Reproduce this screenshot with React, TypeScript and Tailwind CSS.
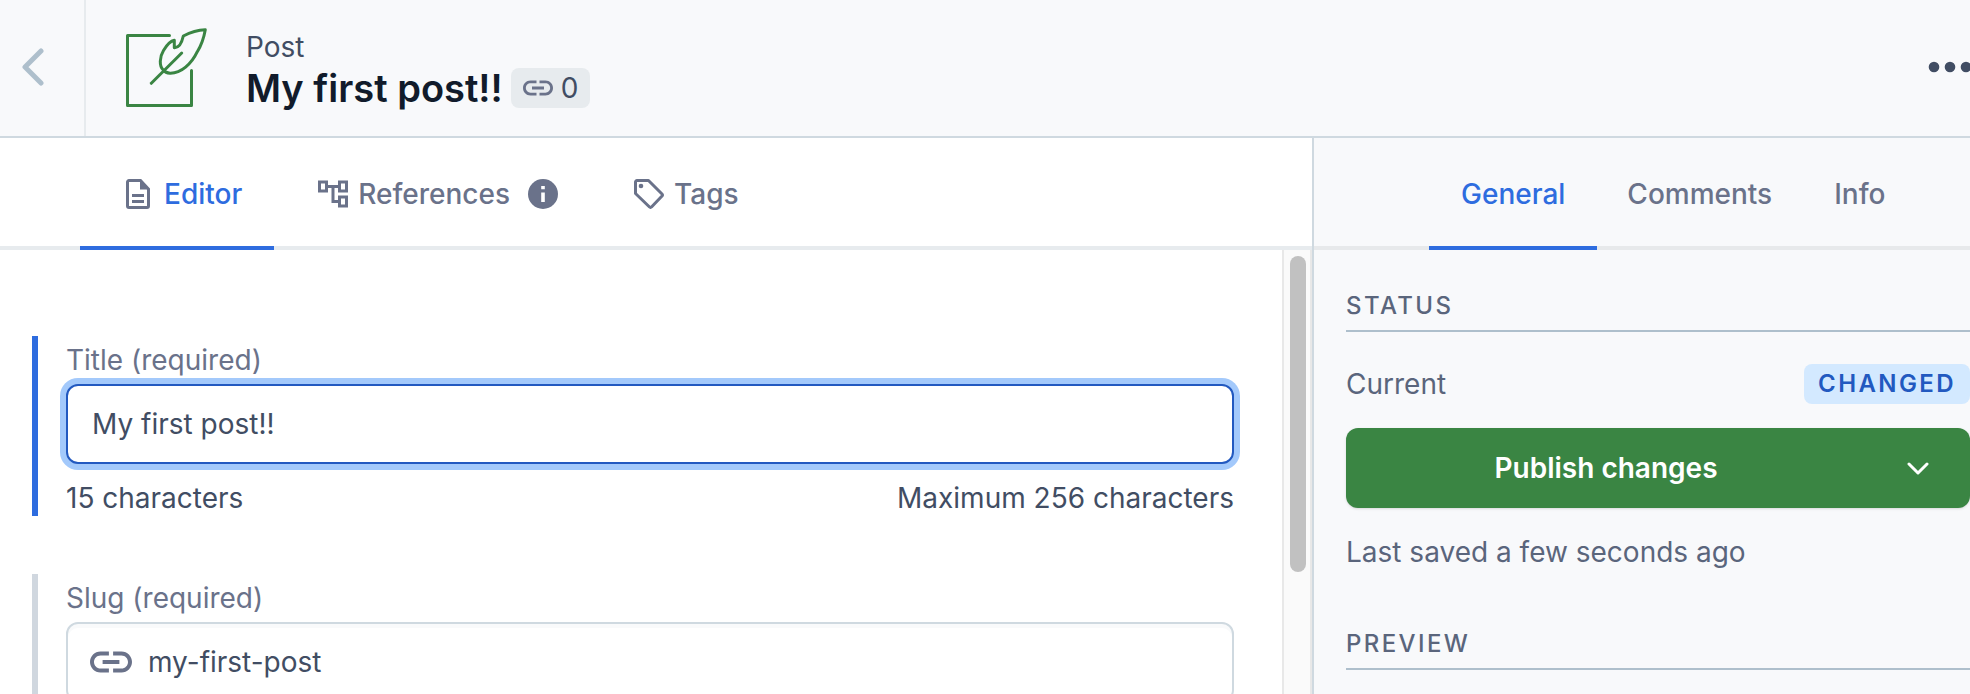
import type { ReactNode } from "react";

type IconProps = { className?: string };

function LinkIcon({ className }: IconProps) {
  return (
    <svg viewBox="2 7 20 10" className={className} fill="currentColor" aria-hidden="true">
      <path d="M3.9 12c0-1.71 1.39-3.1 3.1-3.1h4V7H7c-2.76 0-5 2.24-5 5s2.24 5 5 5h4v-1.9H7c-1.71 0-3.1-1.39-3.1-3.1zM8 13h8v-2H8v2zm9-6h-4v1.9h4c1.71 0 3.1 1.39 3.1 3.1s-1.39 3.1-3.1 3.1h-4V17h4c2.76 0 5-2.24 5-5s-2.24-5-5-5z" />
    </svg>
  );
}

function DocumentIcon() {
  return (
    <svg viewBox="0 0 24 30" className="h-[30px] w-6 shrink-0" aria-hidden="true">
      <path d="M3 1.5h11.5L22.5 10v17a1.5 1.5 0 0 1-1.5 1.5H3A1.5 1.5 0 0 1 1.5 27V3A1.5 1.5 0 0 1 3 1.5z" fill="none" stroke="currentColor" strokeWidth="3" />
      <path d="M14 2v8.500h9zM6 15h12v3H6zM6 21h12v3H6z" fill="currentColor" />
    </svg>
  );
}

function TreeIcon() {
  return (
    <svg viewBox="0 0 30 28" className="h-7 w-[30px] shrink-0" fill="none" stroke="currentColor" strokeWidth="3" aria-hidden="true">
      <path d="M1.5 2h7v9h-7zM21.5 2h7v9h-7zM21.5 17h7v9h-7zM9 6.500h12M15 6.500v15h6" />
    </svg>
  );
}

function InfoIcon() {
  return (
    <svg viewBox="0 0 30 30" className="size-[30px] shrink-0" aria-hidden="true">
      <circle cx="15" cy="15" r="15" fill="currentColor" />
      <path d="M13.200 7h3.600v3.200h-3.600zM13.200 13.500h3.600v9.500h-3.600z" fill="#fff" />
    </svg>
  );
}

function TagIcon() {
  return (
    <svg viewBox="0 0 30 30" className="size-[30px] shrink-0" aria-hidden="true">
      <path d="M3 1.500h11.500L28 15a1.500 1.500 0 0 1 0 2L17.500 28a1.500 1.500 0 0 1-2 0L1.500 14.500V3A1.500 1.500 0 0 1 3 1.500z" fill="none" stroke="currentColor" strokeWidth="3" strokeLinejoin="round" />
      <circle cx="7" cy="7" r="2.300" fill="currentColor" />
    </svg>
  );
}

function PostLogo() {
  return (
    <svg viewBox="0 0 82 82" className="size-[82px]" fill="none" stroke="#3a8543" strokeWidth="3" strokeLinecap="round" strokeLinejoin="round" aria-hidden="true">
      <path d="M43.500 8.500H1.500v70h64V43.500" />
      <path d="M25.300 56.300 55.700 26" />
      <path d="M37.300 43C33 39 33.500 30 37.500 23.500 40.500 18.500 44.500 14 48.300 13.300V20.700C53.500 21 56 15 57.300 9 64 5.500 72 3 79.300 2.700 78 10 75.500 18 71.300 24.700 65.500 37 55 46.500 44 46.200 41 46 38.800 45 37.300 43z" />
    </svg>
  );
}

function Tab({ active = false, className = "", children }: { active?: boolean; className?: string; children: ReactNode }) {
  return (
    <button
      type="button"
      role="tab"
      aria-selected={active}
      className={`flex h-28 items-center border-b-4 pt-1 font-medium ${active ? "border-[#2e6cdf]" : "border-transparent"} ${className}`}
    >
      {children}
    </button>
  );
}

function Section({ title, children }: { title: string; children?: ReactNode }) {
  return (
    <section>
      <h2 className="border-b-2 border-[#aebfcc] pb-2 text-2xl leading-8 font-medium tracking-widest text-[#5a657c] uppercase">
        {title}
      </h2>
      {children}
    </section>
  );
}

export default function App() {
  return (
    <div className="flex h-screen flex-col overflow-hidden bg-white font-['Inter',sans-serif] text-[28px] leading-9 text-[#414d63]">
      <header className="flex shrink-0 items-stretch border-b-2 border-[#cfd9e0] bg-[#f8f9fb]">
        <button type="button" aria-label="Back" className="flex h-[136px] w-[86px] items-center border-r-2 border-[#e7ebee] pb-0.5 pl-[22px]">
          <svg viewBox="0 0 22 38" className="h-[38px] w-[22px]" fill="none" stroke="#aebfcc" strokeWidth="5" strokeLinecap="round" strokeLinejoin="round" aria-hidden="true">
            <path d="M19 3 3 19l16 16" />
          </svg>
        </button>
        <div className="flex flex-1 items-center gap-[38px] pl-10">
          <PostLogo />
          <div className="pt-2">
            <p className="leading-8">Post</p>
            <div className="flex items-center gap-2">
              <h1 className="text-[38px] leading-[50px] font-semibold text-[#111b2b]">My first post!!</h1>
              <span className="flex h-10 items-center gap-2 rounded-lg bg-[#e7ebee] px-3">
                <LinkIcon className="h-4 w-[30px] text-[#6a728a]" />
                0
              </span>
            </div>
          </div>
        </div>
        <button type="button" aria-label="More actions" className="flex w-11 items-center overflow-hidden pb-0.5">
          <svg viewBox="0 0 44 12" className="h-3 w-11 shrink-0" fill="#414d63" aria-hidden="true">
            <circle cx="8" cy="6" r="5.300" />
            <circle cx="24" cy="6" r="5.300" />
            <circle cx="40" cy="6" r="5.300" />
          </svg>
        </button>
      </header>

      <div className="flex min-h-0 flex-1">
        <main className="flex min-w-0 flex-1 flex-col">
          <div role="tablist" className="flex shrink-0 bg-[linear-gradient(#e7ebee,#e7ebee)] bg-[length:100%_4px] bg-bottom bg-no-repeat pl-20 text-[#6a728a]">
            <Tab active className="gap-3.5 pr-8 pl-[46px]">
              <DocumentIcon />
              <span className="text-[#2e6cdf]">Editor</span>
            </Tab>
            <Tab className="gap-2.5 pr-10 pl-11">
              <TreeIcon />
              References
              <span className="ml-2">
                <InfoIcon />
              </span>
            </Tab>
            <Tab className="gap-2.5 px-9">
              <TagIcon />
              Tags
            </Tab>
          </div>
          <div className="flex min-h-0 flex-1">
            <form className="flex min-w-0 flex-1 flex-col gap-[58px] overflow-hidden pt-[86px] pr-12 pl-8">
              <div className="shrink-0 border-l-6 border-[#2e6cdf] pl-7">
                <label htmlFor="title" className="block leading-[48px] text-[#6a728a]">Title (required)</label>
                <input
                  id="title"
                  defaultValue="My first post!!"
                  className="block h-20 w-full rounded-xl border-2 border-[#2259c0] bg-white px-6 ring-6 ring-[#a3c9fb] outline-none"
                />
                <div className="flex justify-between pt-4">
                  <span>15 characters</span>
                  <span>Maximum 256 characters</span>
                </div>
              </div>
              <div className="shrink-0 border-l-6 border-[#d0d7df] pl-7">
                <label htmlFor="slug" className="block leading-[48px] text-[#6a728a]">Slug (required)</label>
                <div className="flex h-20 items-center gap-4 rounded-xl border-2 border-[#cfd9e0] px-[22px] inset-shadow-[0_4px_0_#f9fafb]">
                  <LinkIcon className="h-[22px] w-[42px] shrink-0 text-[#6a728a]" />
                  <input id="slug" defaultValue="my-first-post" className="min-w-0 flex-1 bg-transparent outline-none" />
                </div>
              </div>
            </form>
            <div className="w-[30px] shrink-0 border-x-2 border-[#e8e8e8] bg-[#fafafa] pt-1.5 pl-1.5">
              <div className="h-[316px] w-4 rounded-full bg-[#c1c1c1]" />
            </div>
          </div>
        </main>

        <aside className="flex w-[658px] shrink-0 flex-col border-l-2 border-[#cfd9e0] bg-[#f8f9fb] text-[#5a657c]">
          <div role="tablist" className="flex shrink-0 bg-[linear-gradient(#e7e9eb,#e7e9eb)] bg-[length:100%_4px] bg-bottom bg-no-repeat pl-[115px] text-[#6a728a]">
            <Tab active className="px-8 text-[#2e6cdf]">General</Tab>
            <Tab className="px-[30px]">Comments</Tab>
            <Tab className="px-8">Info</Tab>
          </div>
          <div className="flex flex-col gap-[58px] pt-10 pl-8">
            <Section title="Status">
              <div className="flex items-center justify-between pt-8">
                <span>Current</span>
                <span className="rounded-lg bg-[#d3e9ff] px-3.5 text-2xl leading-10 font-semibold tracking-widest text-[#2259c0]">CHANGED</span>
              </div>
              <div className="mt-6 flex h-20 rounded-xl bg-[#3a8543] font-semibold text-white shadow-sm">
                <button type="button" className="flex-1">Publish changes</button>
                <button type="button" aria-label="More publishing options" className="flex w-[104px] items-center justify-center">
                  <svg viewBox="0 0 22 13" className="h-[13px] w-[22px]" fill="none" stroke="currentColor" strokeWidth="3" strokeLinecap="round" strokeLinejoin="round" aria-hidden="true">
                    <path d="m2 2 9 9 9-9" />
                  </svg>
                </button>
              </div>
              <p className="pt-[26px]">Last saved a few seconds ago</p>
            </Section>
            <Section title="Preview" />
          </div>
        </aside>
      </div>
    </div>
  );
}
